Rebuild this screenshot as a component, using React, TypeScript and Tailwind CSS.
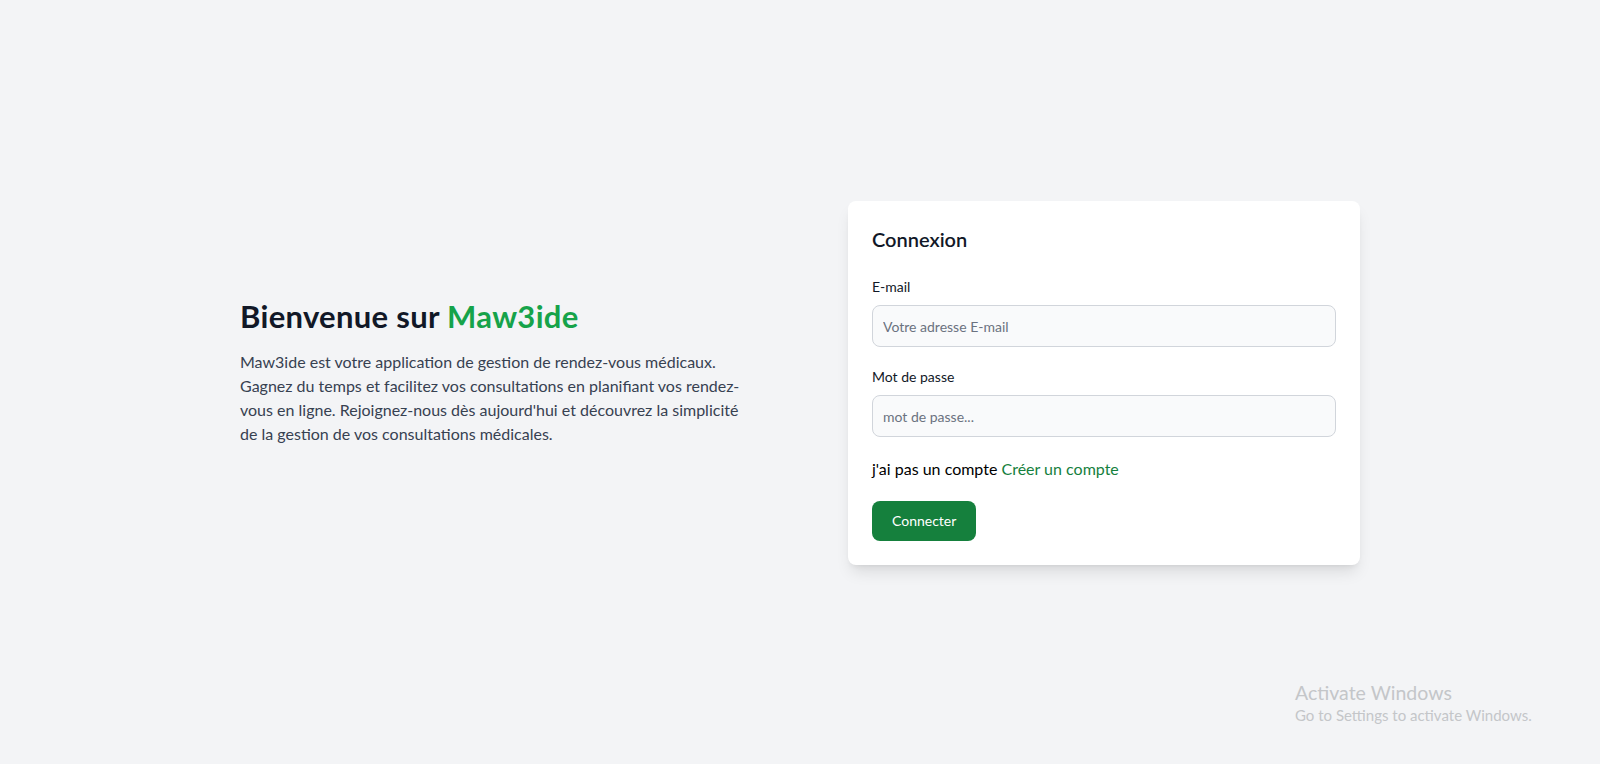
import React from "react";

const font = { fontFamily: '"Segoe UI", Lato, "Liberation Sans", sans-serif' };

export default function App() {
  return (
    <div
      className="relative min-h-screen bg-[#f3f4f6] flex items-center"
      style={font}
    >
      <div className="w-full max-w-6xl mx-auto px-4 flex items-center justify-between">
        <div className="max-w-lg mb-5">
          <h1 className="text-[31px] leading-9 tracking-[0.01em] font-bold text-[#111827] mb-4">
            Bienvenue sur <span className="text-[#16a34a]">Maw3ide</span>
          </h1>
          <p className="text-base leading-6 text-[#374151]">
            Maw3ide est votre application de gestion de rendez-vous médicaux.
            Gagnez du temps et facilitez vos consultations en planifiant vos
            rendez-vous en ligne. Rejoignez-nous dès aujourd'hui et découvrez la
            simplicité de la gestion de vos consultations médicales.
          </p>
        </div>

        <div className="w-full max-w-lg bg-white rounded-lg shadow-lg p-6 mt-0.5">
          <h2 className="text-xl font-semibold text-[#111827] mb-6">Connexion</h2>
          <form className="flex flex-col">
            <label className="text-sm text-[#111827] mb-2">E-mail</label>
            <input
              type="email"
              placeholder="Votre adresse E-mail"
              className="h-[42px] w-full rounded-lg border border-[#d1d5db] bg-[#f9fafb] px-2.5 text-sm text-[#111827] placeholder:text-[#6b7280] mb-5"
            />
            <label className="text-sm text-[#111827] mb-2">Mot de passe</label>
            <input
              type="password"
              placeholder="mot de passe..."
              className="h-[42px] w-full rounded-lg border border-[#d1d5db] bg-[#f9fafb] px-2.5 text-sm text-[#111827] placeholder:text-[#6b7280] mb-5"
            />
            <p className="text-base text-black mb-5">
              j'ai pas un compte{" "}
              <a href="#" className="text-[#15803d]">
                Créer un compte
              </a>
            </p>
            <div>
              <button
                type="button"
                className="h-10 rounded-lg bg-[#15803d] px-5 text-sm text-white"
              >
                Connecter
              </button>
            </div>
          </form>
        </div>
      </div>

      <div className="absolute left-[1295px] top-[681px] text-[#c4c6c9] pointer-events-none">
        <div className="text-[19.5px] leading-6">Activate Windows</div>
        <div className="text-[15px] leading-5">Go to Settings to activate Windows.</div>
      </div>
    </div>
  );
}
